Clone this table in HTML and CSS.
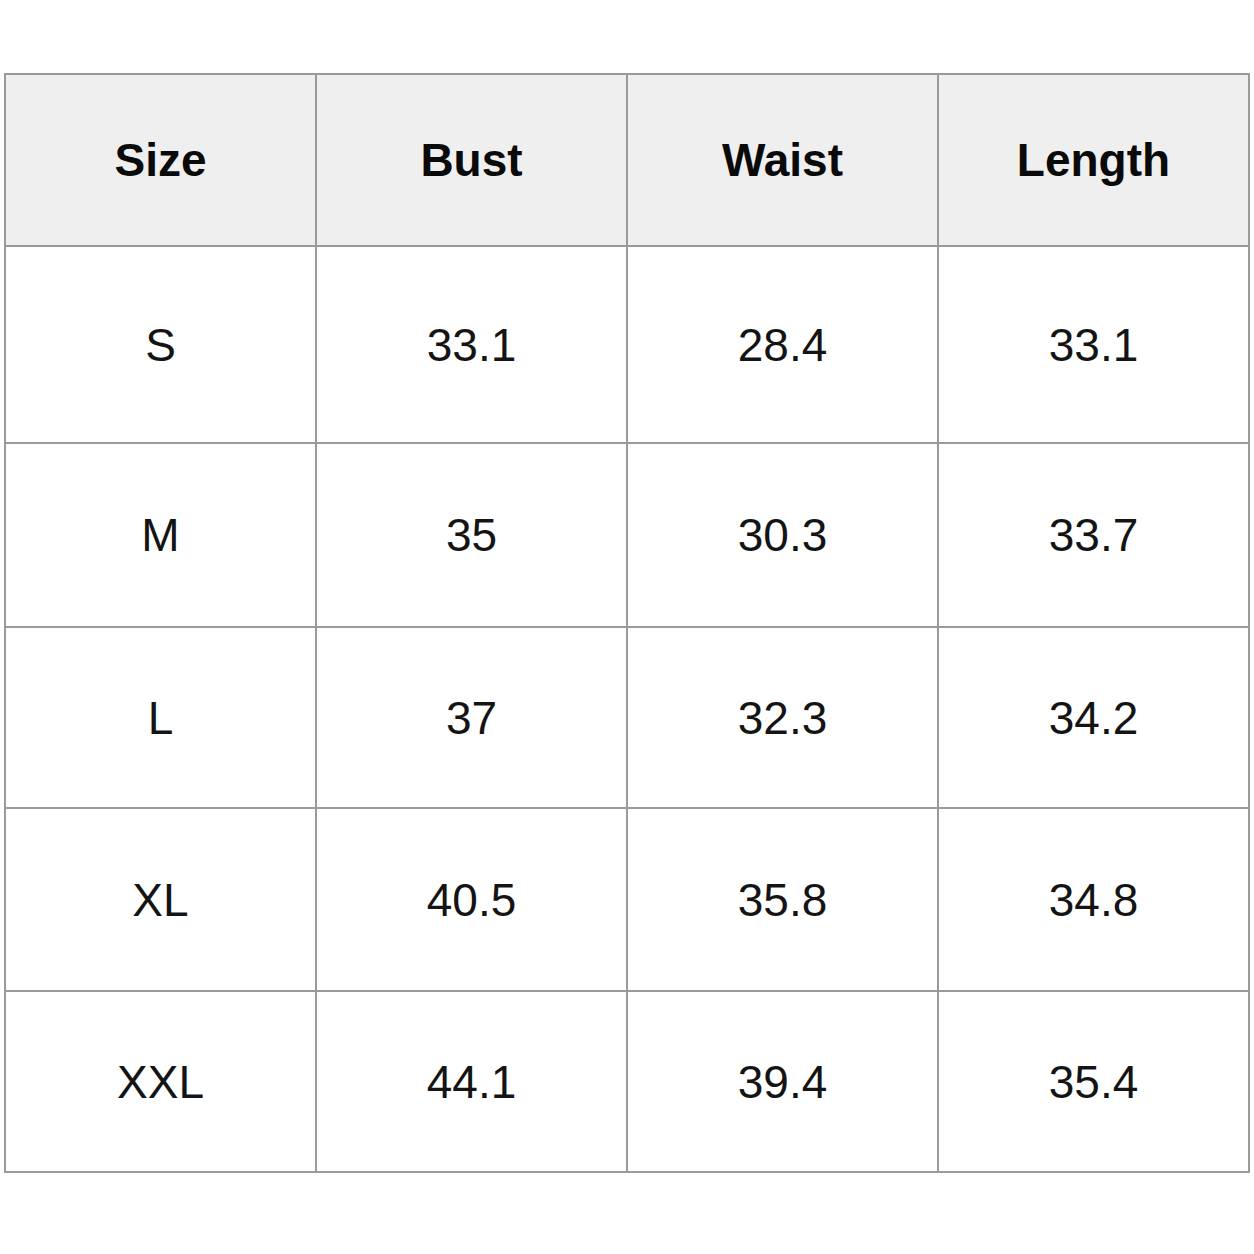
FILE: index.html
```html
<!DOCTYPE html>
<html lang="en">
<head>
<meta charset="utf-8">
<title>Size Chart</title>
<link rel="stylesheet" href="styles.css">
</head>
<body>
<div class="page">
  <div class="chart">
    <div class="cell head">Size</div>
    <div class="cell head">Bust</div>
    <div class="cell head">Waist</div>
    <div class="cell head">Length</div>

    <div class="cell">S</div>
    <div class="cell">33.1</div>
    <div class="cell">28.4</div>
    <div class="cell">33.1</div>

    <div class="cell">M</div>
    <div class="cell">35</div>
    <div class="cell">30.3</div>
    <div class="cell">33.7</div>

    <div class="cell">L</div>
    <div class="cell">37</div>
    <div class="cell">32.3</div>
    <div class="cell">34.2</div>

    <div class="cell">XL</div>
    <div class="cell">40.5</div>
    <div class="cell">35.8</div>
    <div class="cell">34.8</div>

    <div class="cell">XXL</div>
    <div class="cell">44.1</div>
    <div class="cell">39.4</div>
    <div class="cell">35.4</div>
  </div>
</div>
</body>
</html>
```

FILE: styles.css
```css
html, body {
  margin: 0;
  padding: 0;
  background: #ffffff;
}

.page {
  padding: 73px 4px 0 4px;
}

.chart {
  display: grid;
  width: 1246px;
  box-sizing: border-box;
  grid-template-columns: 309px 309px 309px 309px;
  grid-template-rows: 170px 195px 182px 179px 181px 179px;
  gap: 2px;
  padding: 2px;
  background: #9a9a9a;
  font-family: "Liberation Sans", Arial, sans-serif;
  font-size: 46px;
  color: #141414;
}

.cell {
  background: #ffffff;
  display: flex;
  align-items: center;
  justify-content: center;
}

.head {
  background: #efefef;
  font-weight: bold;
  color: #0a0a0a;
}
```
